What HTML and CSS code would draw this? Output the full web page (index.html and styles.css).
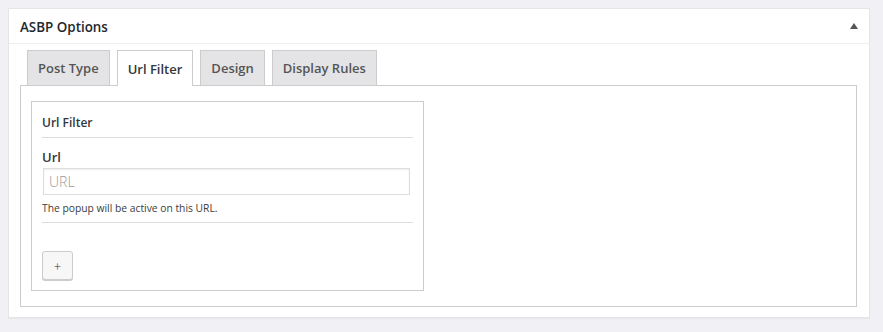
FILE: index.html
```html
<!DOCTYPE html>
<html>
<head>
<meta charset="utf-8">
<link rel="stylesheet" href="styles.css">
</head>
<body>
<div class="postbox">
  <div class="hdr">
    <h2 class="title">ASBP Options</h2>
    <span class="toggle"></span>
  </div>
  <div class="inside">
    <div class="tabs">
      <div class="tab">Post Type</div>
      <div class="tab active">Url Filter</div>
      <div class="tab">Design</div>
      <div class="tab">Display Rules</div>
    </div>
    <div class="panel">
      <div class="group">
        <div class="group-title">Url Filter</div>
        <div class="field">
          <div class="label">Url</div>
          <input class="input" type="text" placeholder="URL">
          <div class="help">The popup will be active on this URL.</div>
        </div>
        <div class="actions">
          <button class="btn">+</button>
        </div>
      </div>
    </div>
  </div>
</div>
</body>
</html>
```
FILE: styles.css
```css
html, body { margin: 0; padding: 0; }
body {
  background: #f1f0f4;
  font-family: "Open Sans", "Noto Sans", sans-serif;
  color: #23282d;
  padding: 8px 12px 0 8px;
  height: 332px;
  box-sizing: border-box;
}
.postbox {
  background: #fff;
  border: 1px solid #e5e5e5;
  box-shadow: 0 1px 1px rgba(0,0,0,0.04);
  width: 862px;
  height: 310px;
  box-sizing: border-box;
}
.hdr {
  height: 35px;
  border-bottom: 1px solid #eee;
  display: flex;
  align-items: center;
  justify-content: space-between;
  padding: 0 11px 0 11px;
  box-sizing: border-box;
}
.title {
  margin: 0;
  font-size: 13.4px;
  font-weight: 600;
  color: #23282d;
  padding-top: 2px;
}
.toggle {
  width: 0; height: 0;
  border-left: 4px solid transparent;
  border-right: 4px solid transparent;
  border-bottom: 6px solid #555;
  margin-top: -1px;
}
.inside {
  padding: 6px 12px 0 11px;
}
.tabs {
  display: flex;
  gap: 7px;
  padding-left: 7px;
  height: 35px;
}
.tab {
  background: #e4e4e6;
  border: 1px solid #ccc;
  border-bottom: none;
  font-size: 13px;
  font-weight: 600;
  color: #555;
  padding: 0 10px;
  display: flex;
  align-items: center;
  box-sizing: border-box;
  height: 35px;
}
.tab.active {
  background: #fff;
  color: #32373c;
  height: 36px;
  position: relative;
  z-index: 1;
}
.panel {
  border: 1px solid #ccc;
  height: 222px;
  box-sizing: border-box;
  padding: 15px 10px 0 10px;
}
.group {
  width: 393px;
  height: 190px;
  box-sizing: border-box;
  border: 1px solid #ccc;
  padding: 0 10px;
}
.group-title {
  font-size: 12px;
  font-weight: 600;
  color: #32373c;
  height: 35px;
  line-height: 42px;
  border-bottom: 1px solid #ddd;
}
.field {
  padding-top: 9px;
  border-bottom: 1px solid #ddd;
  padding-bottom: 7px;
}
.label {
  font-size: 13px;
  font-weight: 600;
  color: #32373c;
  line-height: 20px;
}
.input {
  display: block;
  width: 367px;
  height: 27px;
  margin: 1px 0 0 1px;
  box-sizing: border-box;
  border: 1px solid #ddd;
  box-shadow: inset 0 1px 2px rgba(0,0,0,0.07);
  padding: 0 5px;
  font-family: "Open Sans", "Noto Sans", sans-serif;
  font-size: 14px;
  font-weight: 300;
  color: #32373c;
  outline: none;
}
.input::placeholder { color: #999; }
.help {
  font-size: 10.3px;
  color: #3c3c3c;
  margin-top: 6px;
  line-height: 14px;
}
.actions {
  padding-top: 28px;
}
.btn {
  width: 31px;
  height: 29px;
  background: #f7f7f7;
  border: 1px solid #ccc;
  border-radius: 3px;
  box-shadow: 0 1px 0 #ccc;
  font-family: "Open Sans", "Noto Sans", sans-serif;
  font-size: 13px;
  font-weight: 300;
  color: #333;
  padding: 0;
  cursor: pointer;
}
```
